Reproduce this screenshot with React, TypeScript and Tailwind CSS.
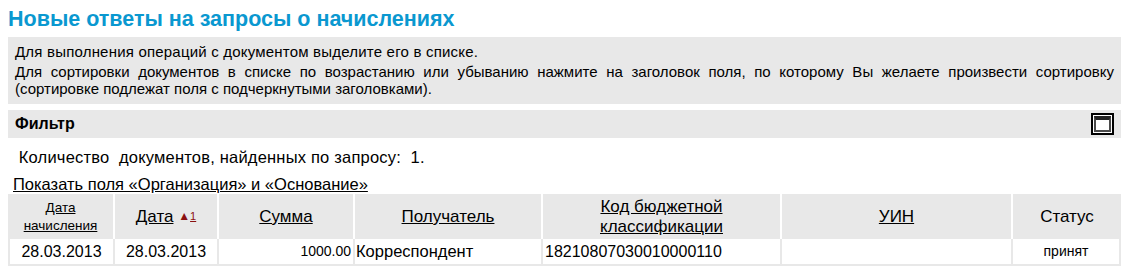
import React from "react";

const font = { fontFamily: '"Liberation Sans", Arial, sans-serif' };

function MaximizeIcon() {
  return (
    <div className="w-[23px] h-[22px] border-2 border-black bg-white p-[1px]">
      <div className="w-full h-full border-2 border-t-[4px] border-[#4a4a4a] border-t-[#222] bg-white" />
    </div>
  );
}

const cols = [
  { key: "d1", w: "w-[107px]" },
  { key: "d2", w: "w-[104px]" },
  { key: "sum", w: "w-[136px]" },
  { key: "rcv", w: "w-[188px]" },
  { key: "kbk", w: "w-[239px]" },
  { key: "uin", w: "w-[231px]" },
  { key: "st", w: "w-[108px]" },
];

export default function App() {
  return (
    <div className="bg-white text-black px-2 min-h-[279px]" style={font}>
      {/* Title */}
      <h1 className="pt-[6px] text-[21.5px] leading-[26px] font-bold text-[#0a98d0]">
        Новые ответы на запросы о начислениях
      </h1>

      {/* Info box */}
      <div className="mt-[5px] bg-[#e8e8e8] px-[7px] pt-[6px] pb-[7px] text-[15px] leading-[17px]">
        <div className="mb-[3px] tracking-[0.2px]">Для выполнения операций с документом выделите его в списке.</div>
        <div className="text-justify">
          Для сортировки документов в списке по возрастанию или убыванию нажмите на заголовок поля, по
          которому Вы желаете произвести сортировку (сортировке подлежат поля с подчеркнутыми
          заголовками).
        </div>
      </div>

      {/* Filter bar */}
      <div className="mt-[6px] h-[28px] bg-[#e8e8e8] flex items-center justify-between pl-[7px] pr-[7px]">
        <span className="text-[16px] font-bold">Фильтр</span>
        <MaximizeIcon />
      </div>

      <div className="mt-[10px] pl-[6px] text-[16.5px] leading-[19px] whitespace-pre tracking-[0.2px]">
        {" Количество  документов, найденных по запросу:  1."}
      </div>
      <div className="mt-[8px] pl-[5px] text-[16.5px] leading-[19px]">
        <a className="underline cursor-pointer">Показать поля «Организация» и «Основание»</a>
      </div>

      <table className="table-fixed border-separate border-spacing-0 w-[1113px]">
        <colgroup>
          {cols.map((c) => (
            <col key={c.key} className={c.w} />
          ))}
        </colgroup>
        <thead>
          <tr className="h-[45px] bg-[#e8e8e8]">
            <th className="font-normal border-r-2 border-white text-[13.5px] leading-[18px]">
              <span className="underline">Дата</span>
              <br />
              <span className="underline">начисления</span>
            </th>
            <th className="font-normal border-r-2 border-white text-[17px]">
              <span className="underline">Дата</span>{" "}
              <span className="text-[11px] text-[#8b1010] align-[2px]">
                <span className="text-[12px]">▲</span>
                <span className="underline">1</span>
              </span>
            </th>
            <th className="font-normal border-r-2 border-white text-[17px]">
              <span className="underline">Сумма</span>
            </th>
            <th className="font-normal border-r-2 border-white text-[17px]">
              <span className="underline">Получатель</span>
            </th>
            <th className="font-normal border-r-2 border-white text-[17px] leading-[20px]">
              <span className="underline">Код бюджетной</span>
              <br />
              <span className="underline">классификации</span>
            </th>
            <th className="font-normal border-r-2 border-white text-[17px]">
              <span className="underline">УИН</span>
            </th>
            <th className="font-normal text-[17px]">Статус</th>
          </tr>
        </thead>
        <tbody>
          <tr className="h-[27px]">
            <td className="border-l-2 border-r-2 border-b-2 border-[#e8e8e8] text-[16px] text-center">
              28.03.2013
            </td>
            <td className="border-r-2 border-b-2 border-[#e8e8e8] text-[16px] text-center">
              28.03.2013
            </td>
            <td className="border-r-2 border-b-2 border-[#e8e8e8] text-[14px] text-right pr-[2px]">
              1000.00
            </td>
            <td className="border-r-2 border-b-2 border-[#e8e8e8] text-[16.5px] pl-[1px]">
              Корреспондент
            </td>
            <td className="border-r-2 border-b-2 border-[#e8e8e8] text-[16px] pl-[2px]">
              18210807030010000110
            </td>
            <td className="border-r-2 border-b-2 border-[#e8e8e8]" />
            <td className="border-r-2 border-b-2 border-[#e8e8e8] text-[14px] text-center">
              принят
            </td>
          </tr>
        </tbody>
      </table>
    </div>
  );
}
